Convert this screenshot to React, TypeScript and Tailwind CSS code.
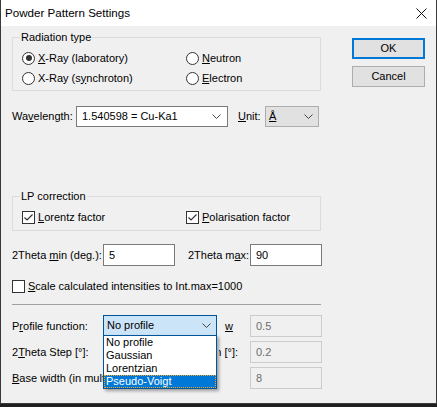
import React from "react";

function U({ children }: { children: React.ReactNode }) {
  return <span className="underline decoration-1 underline-offset-[1px]">{children}</span>;
}

function Chevron() {
  return (
    <svg width="9" height="5" viewBox="0 0 9 5" className="shrink-0">
      <polyline points="0.5,0.5 4.5,4.5 8.5,0.5" fill="none" stroke="#444" strokeWidth="1" />
    </svg>
  );
}

function Radio({ checked, children }: { checked?: boolean; children: React.ReactNode }) {
  return (
    <div className="flex h-[20px] items-center">
      <span className="flex h-[13px] w-[13px] shrink-0 items-center justify-center rounded-full border border-[#333] bg-white">
        {checked && <span className="h-[6px] w-[6px] rounded-full bg-[#333]" />}
      </span>
      <span className="ml-[3px] leading-[13px]">{children}</span>
    </div>
  );
}

function Check({ checked, children }: { checked?: boolean; children: React.ReactNode }) {
  return (
    <div className="flex h-[20px] items-center">
      <span className="flex h-[13px] w-[13px] shrink-0 items-center justify-center border border-[#333] bg-white">
        {checked && (
          <svg width="11" height="11" viewBox="0 0 11 11">
            <polyline points="1.5,5.5 4,8 9.5,2.5" fill="none" stroke="#333" strokeWidth="1.2" />
          </svg>
        )}
      </span>
      <span className="ml-[3px] leading-[13px]">{children}</span>
    </div>
  );
}

function TextBox({ value, disabled }: { value: string; disabled?: boolean }) {
  return (
    <div
      className={
        disabled
          ? "flex h-[22px] w-[72px] shrink-0 items-center border border-[#cccccc] bg-[#f0f0f0] pl-[5px] text-[#6d6d6d]"
          : "flex h-[22px] w-[72px] shrink-0 items-center border border-[#7a7a7a] bg-white pl-[5px]"
      }
    >
      {value}
    </div>
  );
}

export default function App() {
  return (
    <div className="h-[407px] w-[437px] bg-[#1f1f1f] font-['Liberation_Sans',Arial,sans-serif] text-[11px] leading-[13px] text-black">
      <div className="flex h-[404px] w-[437px] flex-col border-x border-b border-[#3a3a3a] bg-[#f0f0f0]">
        {/* title bar */}
        <div className="flex h-[26px] shrink-0 items-center justify-between bg-white">
          <span className="pl-[4px] text-[11.6px] leading-[14px]">Powder Pattern Settings</span>
          <svg width="11" height="11" viewBox="0 0 11 11" className="mr-[9px]">
            <path d="M0.5 0.5 L10.5 10.5 M10.5 0.5 L0.5 10.5" stroke="#111" strokeWidth="1" />
          </svg>
        </div>

        {/* dialog body */}
        <div className="flex pl-[11px] pt-[5px]">
          <div className="flex w-[309px] shrink-0 flex-col">
            <fieldset className="m-0 min-w-0 border border-[#dcdcdc] p-0">
              <legend className="ml-[7px] px-[1px] leading-[13px]">Radiation type</legend>
              <div className="grid grid-cols-[164px_1fr] pb-[2px] pl-[9px] pt-[4px]">
                <Radio checked>
                  <U>X</U>-Ray (laboratory)
                </Radio>
                <Radio>
                  <U>N</U>eutron
                </Radio>
                <Radio>
                  X-Ray (s<U>y</U>nchroton)
                </Radio>
                <Radio>
                  <U>E</U>lectron
                </Radio>
              </div>
            </fieldset>

            <div className="mt-[15px] flex h-[21px] items-center">
              <span className="w-[64px] shrink-0">
                Wa<U>v</U>elength:
              </span>
              <div className="flex h-[21px] w-[152px] shrink-0 items-center justify-between border border-[#7a7a7a] bg-white pl-[5px] pr-[6px]">
                <span>1.540598 = Cu-Ka1</span>
                <Chevron />
              </div>
              <span className="ml-[10px] w-[27px] shrink-0">
                <U>U</U>nit:
              </span>
              <div className="flex h-[21px] w-[54px] shrink-0 items-center justify-between border border-[#adadad] bg-[#e1e1e1] pl-[3px] pr-[5px]">
                <span className="underline decoration-1">Å</span>
                <Chevron />
              </div>
            </div>

            <fieldset className="m-0 mt-[63px] min-w-0 border border-[#dcdcdc] p-0">
              <legend className="ml-[7px] px-[1px] leading-[13px]">LP correction</legend>
              <div className="grid grid-cols-[164px_1fr] pb-[3px] pl-[9px] pt-[4px]">
                <Check checked>
                  <U>L</U>orentz factor
                </Check>
                <Check checked>
                  <U>P</U>olarisation factor
                </Check>
              </div>
            </fieldset>

            <div className="mt-[13px] flex h-[22px] items-center">
              <span className="w-[91px] shrink-0">
                2Theta <U>m</U>in (deg.):
              </span>
              <TextBox value="5" />
              <span className="ml-[13px] w-[62px] shrink-0">
                2Theta m<U>a</U>x:
              </span>
              <TextBox value="90" />
            </div>

            <div className="mt-[10px]">
              <Check>
                <U>S</U>cale calculated intensities to Int.max=1000
              </Check>
            </div>

            <div className="mt-[8px] h-px w-[309px] bg-[#a0a0a0]" />

            <div className="mt-[10px] flex h-[22px] items-center">
              <span className="w-[91px] shrink-0">
                P<U>r</U>ofile function:
              </span>
              <div className="relative h-[21px] w-[114px] shrink-0 self-start">
                <div className="flex h-[21px] items-center justify-between border border-[#005499] bg-[#cce4f7] pl-[3px] pr-[5px]">
                  <span>No profile</span>
                  <Chevron />
                </div>
                <ul className="absolute left-0 top-[20px] z-10 w-[114px] border border-[#005499] bg-white shadow-[2px_2px_3px_rgba(0,0,0,0.35)]">
                  <li className="h-[13px] pl-[2px]">No profile</li>
                  <li className="h-[13px] pl-[2px]">Gaussian</li>
                  <li className="h-[13px] pl-[2px]">Lorentzian</li>
                  <li className="h-[13px] border border-dotted border-[#f5a623] bg-[#0078d7] pl-[1px] leading-[11px] text-white">
                    Pseudo-Voigt
                  </li>
                </ul>
              </div>
              <span className="ml-[8px] w-[25px] shrink-0">
                <U>w</U>
              </span>
              <TextBox value="0.5" disabled />
            </div>

            {/* the open list above hides the middle of the next two rows */}
            <div className="mt-[4px] flex h-[22px] items-center">
              <span className="w-[91px] shrink-0 overflow-hidden whitespace-nowrap">
                2<U>T</U>heta Step [°]:
              </span>
              <span className="ml-[116px] flex w-[31px] shrink-0 justify-end overflow-hidden whitespace-nowrap pr-[12px]">
                <span className="shrink-0">Width [°]:</span>
              </span>
              <TextBox value="0.2" disabled />
            </div>

            <div className="mt-[4px] flex h-[22px] items-center">
              <span className="w-[91px] shrink-0 overflow-hidden whitespace-nowrap">
                <U>B</U>ase width (in multiples of FWHM):
              </span>
              <span className="w-[147px] shrink-0" />
              <TextBox value="8" disabled />
            </div>
          </div>

          {/* dialog buttons */}
          <div className="ml-[31px] flex flex-col pt-[7px]">
            <button className="flex h-[21px] w-[73px] items-center justify-center border-2 border-[#0078d7] bg-[#e1e1e1]">
              OK
            </button>
            <button className="mt-[7px] flex h-[21px] w-[73px] items-center justify-center border border-[#adadad] bg-[#e1e1e1]">
              Cancel
            </button>
          </div>
        </div>
      </div>
    </div>
  );
}
